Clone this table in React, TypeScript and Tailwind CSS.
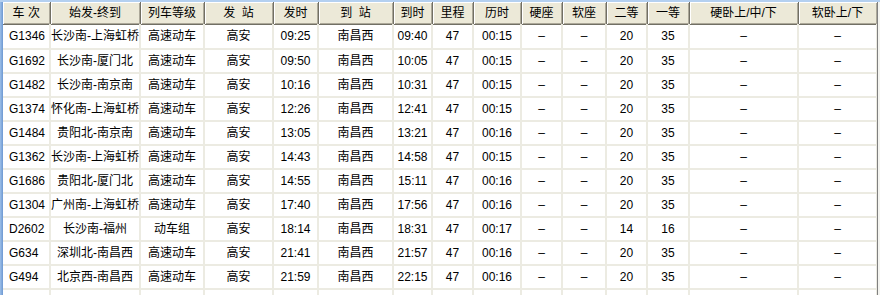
import React from "react";

const cols = [47, 90, 64, 69, 45, 75, 39, 41, 48, 41, 44, 41, 42, 109, 79];
const headers = ["车 次", "始发-终到", "列车等级", "发  站", "发时", "到  站", "到时", "里程", "历时", "硬座", "软座", "二等", "一等", "硬卧上/中/下", "软卧上/下"];

const D = "–";
const rows: string[][] = [
  ["G1346", "长沙南-上海虹桥", "高速动车", "高安", "09:25", "南昌西", "09:40", "47", "00:15", D, D, "20", "35", D, D],
  ["G1692", "长沙南-厦门北", "高速动车", "高安", "09:50", "南昌西", "10:05", "47", "00:15", D, D, "20", "35", D, D],
  ["G1482", "长沙南-南京南", "高速动车", "高安", "10:16", "南昌西", "10:31", "47", "00:15", D, D, "20", "35", D, D],
  ["G1374", "怀化南-上海虹桥", "高速动车", "高安", "12:26", "南昌西", "12:41", "47", "00:15", D, D, "20", "35", D, D],
  ["G1484", "贵阳北-南京南", "高速动车", "高安", "13:05", "南昌西", "13:21", "47", "00:16", D, D, "20", "35", D, D],
  ["G1362", "长沙南-上海虹桥", "高速动车", "高安", "14:43", "南昌西", "14:58", "47", "00:15", D, D, "20", "35", D, D],
  ["G1686", "贵阳北-厦门北", "高速动车", "高安", "14:55", "南昌西", "15:11", "47", "00:16", D, D, "20", "35", D, D],
  ["G1304", "广州南-上海虹桥", "高速动车", "高安", "17:40", "南昌西", "17:56", "47", "00:16", D, D, "20", "35", D, D],
  ["D2602", "长沙南-福州", "动车组", "高安", "18:14", "南昌西", "18:31", "47", "00:17", D, D, "14", "16", D, D],
  ["G634", "深圳北-南昌西", "高速动车", "高安", "21:41", "南昌西", "21:57", "47", "00:16", D, D, "20", "35", D, D],
  ["G494", "北京西-南昌西", "高速动车", "高安", "21:59", "南昌西", "22:15", "47", "00:16", D, D, "20", "35", D, D],
  ["", "", "", "", "", "", "", "", "", "", "", "", "", "", ""],
];

export default function App() {
  return (
    <div
      className="w-[880px] h-[295px] overflow-hidden bg-white text-black text-[12px] leading-none"
      style={{ fontFamily: '"Liberation Sans", "Noto Sans CJK SC", sans-serif' }}
    >
      <div className="h-[2px] bg-[#b4d0f0]" />
      <div className="flex h-[293px]">
        <div className="w-[3px] bg-gradient-to-r from-[#9cbfe8] to-[#6d98d2]" />
        <div className="w-[874px] overflow-hidden">
          <table className="table-fixed border-collapse w-[874px]">
            <colgroup>
              {cols.map((w, i) => (
                <col key={i} style={{ width: w }} />
              ))}
            </colgroup>
            <thead>
              <tr className="h-[22px]">
                {headers.map((h, i) => (
                  <th
                    key={i}
                    className="p-0 font-normal bg-[#ece9d8] border-r border-b border-[#716f64] shadow-[inset_1px_1px_0_#ffffff,inset_-1px_-1px_0_#aca899] whitespace-pre text-center align-middle"
                  >
                    {h}
                  </th>
                ))}
              </tr>
            </thead>
            <tbody>
              {rows.map((r, ri) => (
                <tr key={ri} className={ri === 0 ? "h-[25px]" : "h-[24px]"}>
                  {r.map((c, ci) => (
                    <td
                      key={ci}
                      className={`p-0 border-r-2 border-b-2 border-[#ecebe2] align-middle whitespace-nowrap ${
                        ci === 0 ? "text-left pl-[6px]" : "text-center"
                      }`}
                    >
                      {c}
                    </td>
                  ))}
                </tr>
              ))}
            </tbody>
          </table>
        </div>
        <div className="w-[3px] border-l border-[#808080] bg-[#f4f4f0]" />
      </div>
    </div>
  );
}
